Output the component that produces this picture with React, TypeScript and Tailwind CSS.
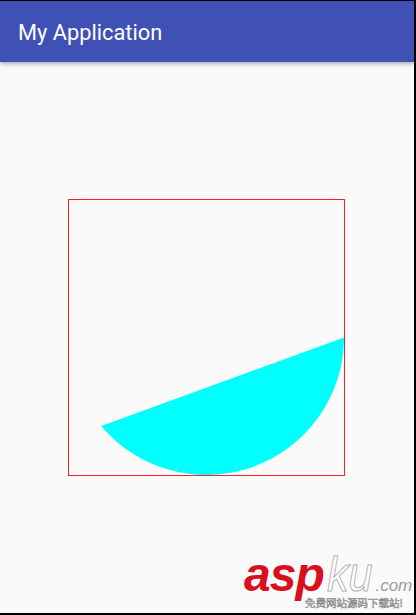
export default function App() {
  return (
    <div className="relative w-[416px] h-[615px] overflow-hidden bg-black">
      <div className="absolute left-0 top-[1px] w-[414px] h-[612px] bg-[#fafafa] flex flex-col">
        <div className="h-[61px] bg-[#3f51b5] flex items-center pl-[18px] shadow-[0_2px_4px_rgba(0,0,0,0.3)] z-10">
          <span className="text-white text-[21.8px] leading-none font-['Roboto',sans-serif] mt-[2px]">
            My Application
          </span>
        </div>
        <div className="pl-[68px] pt-[137px]">
          <svg width="277" height="277" viewBox="0 0 277 277">
            <path
              d="M 276 138.5 A 137.5 137.5 0 0 1 33.17 226.88 Z"
              fill="#00ffff"
            />
            <rect x="0.5" y="0.5" width="276" height="276" fill="none" stroke="#ff2020" strokeWidth="1" />
          </svg>
        </div>
      </div>
      {/* watermark */}
      <div className="absolute left-[244px] top-[551px] w-[172px] h-[62px] font-['Liberation_Sans',sans-serif]">
        <div className="flex items-baseline leading-none">
          <span className="text-[48px] font-bold italic text-[#d8101e] tracking-[-1px]">asp</span>
          <span
            className="text-[48px] italic text-white ml-[3px] scale-x-90 origin-left inline-block"
            style={{ WebkitTextStroke: "1px #b0b0b0" }}
          >
            ku
          </span>
          <span className="text-[17px] italic text-[#9a9a9a] -ml-[2px]">.com</span>
        </div>
        <div
          className="absolute left-[61px] top-[47px] text-[10.5px] leading-none text-white font-['Noto_Sans_CJK_SC',sans-serif] whitespace-nowrap"
          style={{ WebkitTextStroke: "0.6px #8a8a8a" }}
        >
          免费网站源码下载站!
        </div>
      </div>
    </div>
  );
}
